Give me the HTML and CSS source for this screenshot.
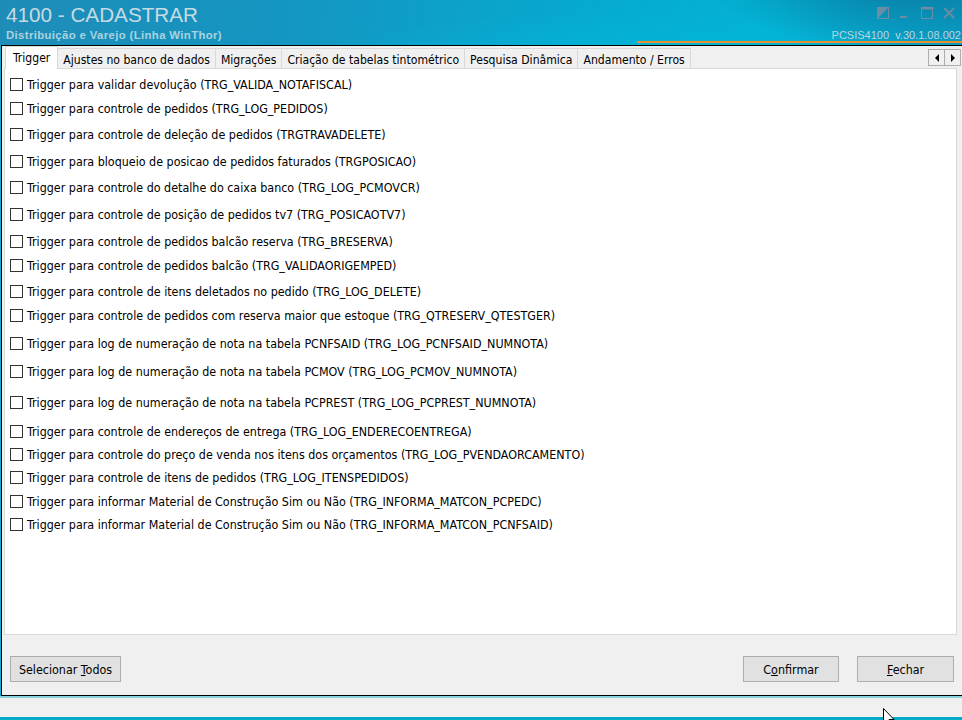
FILE: index.html
```html
<!DOCTYPE html>
<html lang="pt-BR">
<head>
  <meta charset="UTF-8" />
  <meta name="viewport" content="width=device-width, initial-scale=1.0" />
  <title>4100 - CADASTRAR</title>
  <link rel="stylesheet" href="styles.css">
</head>
<body>
  <div class="app">
    <header class="titlebar">
      <div class="title-text">
        <div class="title">4100 - CADASTRAR</div>
        <div class="subtitle">Distribuição e Varejo (Linha WinThor)</div>
      </div>
      <div class="title-right">
        <div class="win-controls">
          <svg class="ctl" viewBox="0 0 12 12">
            <rect x="0.5" y="0.5" width="11" height="11" fill="none" stroke="currentColor" />
            <path d="M1 11 L11 1 L1 1 Z" fill="currentColor" />
          </svg>
          <svg class="ctl" viewBox="0 0 12 12">
            <rect x="1" y="9" width="7" height="2" fill="currentColor" />
          </svg>
          <svg class="ctl" viewBox="0 0 12 12">
            <rect x="0.5" y="0.5" width="11" height="11" fill="none" stroke="currentColor" />
            <rect x="0.5" y="0.5" width="11" height="2" fill="currentColor" />
          </svg>
          <svg class="ctl" viewBox="0 0 12 12">
            <path d="M1 1 L11 11 M11 1 L1 11" stroke="currentColor" stroke-width="1.8" />
          </svg>
        </div>
        <div class="version">PCSIS4100&nbsp;&nbsp;v.30.1.08.002</div>
      </div>
    </header>

    <div class="window">
      <div class="tabbar">
        <div class="tab active">Trigger</div>
        <div class="tab">Ajustes no banco de dados</div>
        <div class="tab">Migrações</div>
        <div class="tab">Criação de tabelas tintométrico</div>
        <div class="tab">Pesquisa Dinâmica</div>
        <div class="tab">Andamento / Erros</div>
        <div class="tab-scroll">
          <button class="scroll-btn"><span class="arrow left"></span></button>
          <button class="scroll-btn"><span class="arrow right"></span></button>
        </div>
      </div>

      <div class="panel">
        <ul class="trigger-list">
          <li><span class="check"></span>Trigger para validar devolução (TRG_VALIDA_NOTAFISCAL)</li>
          <li><span class="check"></span>Trigger para controle de pedidos (TRG_LOG_PEDIDOS)</li>
          <li><span class="check"></span>Trigger para controle de deleção de pedidos (TRGTRAVADELETE)</li>
          <li><span class="check"></span>Trigger para bloqueio de posicao de pedidos faturados (TRGPOSICAO)</li>
          <li><span class="check"></span>Trigger para controle do detalhe do caixa banco (TRG_LOG_PCMOVCR)</li>
          <li><span class="check"></span>Trigger para controle de posição de pedidos tv7 (TRG_POSICAOTV7)</li>
          <li><span class="check"></span>Trigger para controle de pedidos balcão reserva (TRG_BRESERVA)</li>
          <li><span class="check"></span>Trigger para controle de pedidos balcão (TRG_VALIDAORIGEMPED)</li>
          <li><span class="check"></span>Trigger para controle de itens deletados no pedido (TRG_LOG_DELETE)</li>
          <li><span class="check"></span>Trigger para controle de pedidos com reserva maior que estoque (TRG_QTRESERV_QTESTGER)</li>
          <li><span class="check"></span>Trigger para log de numeração de nota na tabela PCNFSAID (TRG_LOG_PCNFSAID_NUMNOTA)</li>
          <li><span class="check"></span>Trigger para log de numeração de nota na tabela PCMOV (TRG_LOG_PCMOV_NUMNOTA)</li>
          <li><span class="check"></span>Trigger para log de numeração de nota na tabela PCPREST (TRG_LOG_PCPREST_NUMNOTA)</li>
          <li><span class="check"></span>Trigger para controle de endereços de entrega (TRG_LOG_ENDERECOENTREGA)</li>
          <li><span class="check"></span>Trigger para controle do preço de venda nos itens dos orçamentos (TRG_LOG_PVENDAORCAMENTO)</li>
          <li><span class="check"></span>Trigger para controle de itens de pedidos (TRG_LOG_ITENSPEDIDOS)</li>
          <li><span class="check"></span>Trigger para informar Material de Construção Sim ou Não (TRG_INFORMA_MATCON_PCPEDC)</li>
          <li><span class="check"></span>Trigger para informar Material de Construção Sim ou Não (TRG_INFORMA_MATCON_PCNFSAID)</li>
        </ul>
      </div>

      <div class="actions">
        <button class="btn btn-select">Selecionar <u>T</u>odos</button>
        <div class="actions-right">
          <button class="btn btn-confirm">C<u>o</u>nfirmar</button>
          <button class="btn btn-close"><u>F</u>echar</button>
        </div>
      </div>
    </div>

    <footer class="statusbar"></footer>

    <svg class="cursor" viewBox="0 0 12 19">
      <path d="M0.5 0.5 L0.5 16 L4 12.5 L6.5 18 L8.5 17 L6 11.5 L11 11.5 Z" fill="#fff" stroke="#000" stroke-width="1" />
    </svg>
  </div>
</body>
</html>
```

FILE: styles.css
```css
body {
  margin: 0;
  overflow: hidden;
  background: #f0f0f0;
}

.app {
  position: relative;
  width: 962px;
  height: 720px;
  overflow: hidden;
  background: #1aa9c8;
  font-family: "DejaVu Sans Condensed", "DejaVu Sans", sans-serif;
  font-stretch: condensed;
  font-size: 12.4px;
  color: #000;
}

/* title bar */
.titlebar {
  height: 45px;
  box-sizing: border-box;
  display: flex;
  justify-content: space-between;
  padding-left: 6px;
  background:
    radial-gradient(ellipse 520px 120px at 620px 95px, rgba(0, 200, 230, 0.55), rgba(0, 200, 230, 0) 70%),
    radial-gradient(ellipse 260px 90px at 900px -20px, rgba(10, 90, 130, 0.55), rgba(10, 90, 130, 0) 75%),
    linear-gradient(100deg, #1e8cb7 0%, #1496c2 30%, #06a9d0 60%, #03b2d4 80%, #0a9cc4 100%);
  font-family: "Liberation Sans", Arial, sans-serif;
  font-stretch: normal;
}

.title-text {
  display: flex;
  flex-direction: column;
  padding-top: 3px;
}

.title {
  font-size: 20.7px;
  line-height: 24px;
  color: #c6dbe3;
}

.subtitle {
  font-size: 11.4px;
  font-weight: bold;
  letter-spacing: 0.35px;
  line-height: 13px;
  margin-top: 2px;
  color: #a9d3df;
}

.title-right {
  width: 325px;
  box-sizing: border-box;
  display: flex;
  flex-direction: column;
  align-items: flex-end;
  border-bottom: 2px solid #e8902c;
  margin-bottom: 2px;
}

.win-controls {
  display: flex;
  gap: 10px;
  padding: 7px 7px 0 0;
  color: rgba(140, 140, 160, 0.75);
}

.ctl {
  width: 12px;
  height: 12px;
}

.version {
  margin-top: 10px;
  margin-right: 1px;
  font-size: 11px;
  line-height: 12px;
  color: #b7d6df;
  white-space: nowrap;
}

/* window body */
.window {
  height: 651px;
  box-sizing: border-box;
  margin-left: 1px;
  border-top: 1px solid #000;
  border-left: 1px solid #000;
  border-bottom: 1px solid #000;
  background: #f0f0f0;
  display: flex;
  flex-direction: column;
}

.tabbar {
  height: 22px;
  display: flex;
  align-items: flex-end;
  padding-left: 3px;
  flex-shrink: 0;
  font-size: 12.1px;
}

.tab {
  height: 20px;
  line-height: 18px;
  padding: 2px 5px 0;
  box-sizing: border-box;
  border: 1px solid #d9d9d9;
  border-bottom: none;
  margin-left: -1px;
  background: #f0f0f0;
  white-space: nowrap;
}

.tab.active {
  height: 23px;
  line-height: 20px;
  margin-bottom: -1px;
  margin-left: 0;
  padding: 1px 7px 0 7px;
  background: #fff;
  position: relative;
  z-index: 1;
}

.tab-scroll {
  margin-left: auto;
  align-self: flex-start;
  margin-top: 3px;
  margin-right: 1px;
  display: flex;
}

.scroll-btn {
  width: 17px;
  height: 17px;
  padding: 0;
  margin: 0 0 0 -1px;
  border: 1px solid #adadad;
  background: #f0f0f0;
  display: flex;
  align-items: center;
  justify-content: center;
}

.arrow {
  width: 0;
  height: 0;
  border-top: 4px solid transparent;
  border-bottom: 4px solid transparent;
}

.arrow.left {
  border-right: 4px solid #000;
}

.arrow.right {
  border-left: 4px solid #000;
}

.panel {
  height: 567px;
  box-sizing: border-box;
  margin: 0 5px 0 2px;
  border: 1px solid #d9d9d9;
  background: #fff;
  flex-shrink: 0;
}

.trigger-list {
  list-style: none;
  margin: 0;
  padding: 7px 0 0 5px;
  display: grid;
  grid-template-rows: 24px 26px 27px 26px 27px 27px 24px 26px 24px 28px 28px 31px 29px 23px 23px 24px 23px 23px;
  align-items: start;
}

.trigger-list li {
  height: 16px;
  display: flex;
  align-items: center;
  gap: 4px;
  white-space: nowrap;
}

.check {
  width: 13px;
  height: 13px;
  box-sizing: border-box;
  border: 1px solid #333;
  background: #fff;
  flex-shrink: 0;
}

/* bottom buttons */
.actions {
  flex: 1;
  display: flex;
  justify-content: space-between;
  align-items: flex-start;
  padding: 21px 8px 0 8px;
}

.actions-right {
  display: flex;
  gap: 18px;
}

.btn {
  height: 26px;
  box-sizing: border-box;
  border: 1px solid #adadad;
  background: #e1e1e1;
  font: inherit;
  color: #000;
  padding: 0;
}

.btn-select {
  width: 111px;
}

.btn-confirm {
  width: 96px;
}

.btn-close {
  width: 97px;
}

.statusbar {
  height: 24px;
  box-sizing: border-box;
  border-top: 2px solid #86d3de;
  border-bottom: 3px solid #00abc8;
  background: #f0f0f0;
}

.cursor {
  position: absolute;
  left: 883px;
  top: 708px;
  width: 12px;
  height: 19px;
}
```
